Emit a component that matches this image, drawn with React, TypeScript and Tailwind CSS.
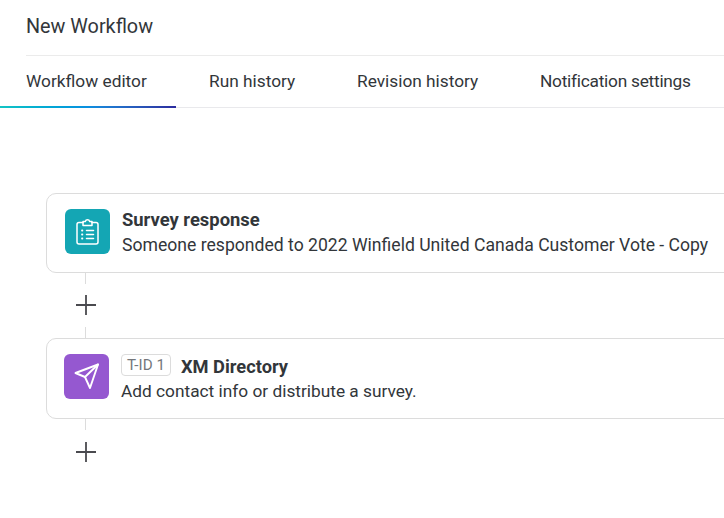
import React from 'react';

const tabs = [
  { label: 'Workflow editor', width: 'w-[176px] pl-[26px]' },
  { label: 'Run history', width: 'w-[149px] pl-[33px]' },
  { label: 'Revision history', width: 'w-[182px] pl-[32px]' },
  { label: 'Notification settings', width: 'w-[190px] pl-[33px] tracking-[-0.25px]' },
];

const AddStep: React.FC<{ last?: boolean }> = ({ last }) => (
  <div className="ml-[76px] h-[65px] w-[20px]">
    <div className="ml-[9px] h-[11px] w-[1px] bg-[#dcdcdc]" />
    <svg width="20" height="20" viewBox="0 0 20 20" className={`block ${last ? 'mt-[12px]' : 'mt-[11px]'}`}>
      <path d="M10 0v20M0 10h20" stroke="#4a4a4f" strokeWidth="1.8" />
    </svg>
    {!last && <div className="ml-[9px] mt-[12px] h-[11px] w-[1px] bg-[#dcdcdc]" />}
  </div>
);

const SurveyIcon = () => (
  <svg width="45" height="45" viewBox="0 0 45 45" fill="none" stroke="#fff" strokeWidth="1.5" strokeLinecap="round" strokeLinejoin="round">
    <path d="M18 13.500h-4a2 2 0 0 0-2 2V33a2 2 0 0 0 2 2h17a2 2 0 0 0 2-2V15.500a2 2 0 0 0-2-2h-4" />
    <path d="M18 16.500v-4h2.300a2.300 2.300 0 0 1 4.400 0H27v4z" />
    <path d="M21.500 21.500h7M21.500 25.500h7M21.500 29.500h7" />
    <path d="M17 21.500h.4M17 25.500h.4M17 29.500h.4" strokeWidth="1.8" />
  </svg>
);

const SendIcon = () => (
  <svg width="45" height="45" viewBox="0 0 45 45" fill="none" stroke="#fff" strokeWidth="1.9" strokeLinejoin="round" strokeLinecap="round">
    <path d="M11.500 19 34 10.500 26 34 21 23z" />
    <path d="M21 23 34 10.500" />
  </svg>
);

export default function App() {
  return (
    <div className="h-[518px] w-[724px] overflow-hidden bg-white font-['Roboto',sans-serif] text-[#32363a]">
      <div className="ml-[26px] flex h-[56px] items-center border-b border-[#ebebeb] pb-[1px] text-[19.8px]">New Workflow</div>
      <div className="flex h-[52px] border-b border-[#e9e9ec] text-[17.300px]">
        {tabs.map((tab, i) => (
          <div key={tab.label} className={`relative flex shrink-0 items-center whitespace-nowrap ${tab.width}`}>
            {tab.label}
            {i === 0 && <div className="absolute -bottom-px left-0 h-[2px] w-full bg-gradient-to-r from-[#14c4c4] via-[#0a8fe0] to-[#2b2b9e]" />}
          </div>
        ))}
      </div>
      <div className="pt-[85px]">
        <div className="ml-[46px] flex h-[80px] w-[700px] gap-[12px] rounded-l-[10px] border border-[#dcdcdc] pl-[18px] pt-[15px]">
          <div className="h-[45px] w-[45px] shrink-0 rounded-[6px] bg-[#14a6b4]">
            <SurveyIcon />
          </div>
          <div className="-mt-[2px]">
            <div className="text-[18.400px] font-bold leading-[25px]">Survey response</div>
            <div className="mt-[1px] text-[17.600px] leading-[25px] whitespace-nowrap">Someone responded to 2022 Winfield United Canada Customer Vote - Copy</div>
          </div>
        </div>
        <AddStep />
        <div className="ml-[46px] flex h-[81px] w-[700px] gap-[12px] rounded-l-[10px] border border-[#dcdcdc] pl-[17px] pt-[15px]">
          <div className="h-[45px] w-[45px] shrink-0 rounded-[6px] bg-[#9558d0]">
            <SendIcon />
          </div>
          <div>
            <div className="flex h-[25px] items-start gap-[10px]">
              <span className="rounded-[4px] border border-[#dcdcdc] px-[5px] text-[15.200px] leading-[20px] text-[#74777b]">T-ID 1</span>
              <span className="text-[18.300px] font-bold leading-[25px]">XM Directory</span>
            </div>
            <div className="text-[17.300px] leading-[25px]">Add contact info or distribute a survey.</div>
          </div>
        </div>
        <AddStep last />
      </div>
    </div>
  );
}
